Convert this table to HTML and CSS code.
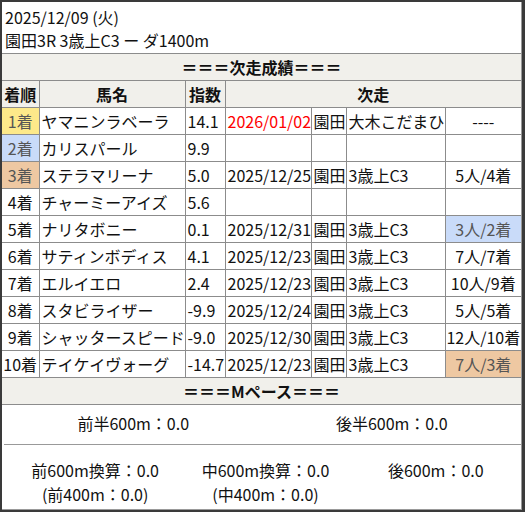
FILE: index.html
```html
<!DOCTYPE html>
<html lang="ja">
<head>
<meta charset="utf-8">
<link rel="stylesheet" href="styles.css">
</head>
<body>
<div class="page">
  <div class="head">
    <div class="line">2025/12/09 (火)</div>
    <div class="line">園田3R 3歳上C3 ー ダ1400m</div>
  </div>
  <table class="res">
    <colgroup>
      <col class="c1"><col class="c2"><col class="c3"><col class="c4"><col class="c5"><col class="c6"><col class="c7">
    </colgroup>
    <tr class="title"><td colspan="7">＝＝＝次走成績＝＝＝</td></tr>
    <tr class="hdr"><td>着順</td><td>馬名</td><td>指数</td><td colspan="4">次走</td></tr>
    <tr><td class="pos gold">1着</td><td>ヤマニンラベーラ</td><td>14.1</td><td class="red">2026/01/02</td><td>園田</td><td>大木こだまひ</td><td class="out">----</td></tr>
    <tr><td class="pos silver">2着</td><td>カリスパール</td><td>9.9</td><td></td><td></td><td></td><td class="out"></td></tr>
    <tr><td class="pos bronze">3着</td><td>ステラマリーナ</td><td>5.0</td><td>2025/12/25</td><td>園田</td><td>3歳上C3</td><td class="out">5人/4着</td></tr>
    <tr><td class="pos">4着</td><td>チャーミーアイズ</td><td>5.6</td><td></td><td></td><td></td><td class="out"></td></tr>
    <tr><td class="pos">5着</td><td>ナリタボニー</td><td>0.1</td><td>2025/12/31</td><td>園田</td><td>3歳上C3</td><td class="out silver">3人/2着</td></tr>
    <tr><td class="pos">6着</td><td>サティンボディス</td><td>4.1</td><td>2025/12/23</td><td>園田</td><td>3歳上C3</td><td class="out">7人/7着</td></tr>
    <tr><td class="pos">7着</td><td>エルイエロ</td><td>2.4</td><td>2025/12/23</td><td>園田</td><td>3歳上C3</td><td class="out">10人/9着</td></tr>
    <tr><td class="pos">8着</td><td>スタビライザー</td><td>-9.9</td><td>2025/12/24</td><td>園田</td><td>3歳上C3</td><td class="out">5人/5着</td></tr>
    <tr><td class="pos">9着</td><td>シャッタースピード</td><td>-9.0</td><td>2025/12/30</td><td>園田</td><td>3歳上C3</td><td class="out">12人/10着</td></tr>
    <tr><td class="pos">10着</td><td>テイケイヴォーグ</td><td>-14.7</td><td>2025/12/23</td><td>園田</td><td>3歳上C3</td><td class="out bronze">7人/3着</td></tr>
    <tr class="title"><td colspan="7">＝＝＝Mペース＝＝＝</td></tr>
  </table>
  <div class="halves">
    <div class="cell">前半600m：0.0</div>
    <div class="cell">後半600m：0.0</div>
  </div>
  <div class="thirds">
    <div class="cell"><div>前600m換算：0.0</div><div>(前400m：0.0)</div></div>
    <div class="cell"><div>中600m換算：0.0</div><div>(中400m：0.0)</div></div>
    <div class="cell"><div>後600m：0.0</div></div>
  </div>
</div>
</body>
</html>
```

FILE: styles.css
```css
html, body {
  margin: 0;
  padding: 0;
}
body {
  background: #3a3a3a;
  width: 525px;
  height: 512px;
  box-sizing: border-box;
  padding: 2px 3px 2px 2px;
  font-family: "Noto Sans CJK JP", "Noto Sans", sans-serif;
  font-size: 16px;
  color: #111;
}
.page {
  background: #fff;
  height: 508px;
  box-sizing: border-box;
  border-right: 1px solid #999;
  border-bottom: 1px solid #999;
}
.head {
  padding: 4px 3px 1px;
}
.line {
  line-height: 23px;
  height: 23px;
  white-space: nowrap;
}
.res {
  border-collapse: collapse;
  width: 519px;
  table-layout: fixed;
}
.c1 { width: 37px; }
.c2 { width: 146px; }
.c3 { width: 40px; }
.c4 { width: 86px; }
.c5 { width: 35px; }
.c6 { width: 99px; }
.c7 { width: 76px; }
.res td {
  border: 1px solid #8c8c8c;
  height: 27px;
  box-sizing: border-box;
  padding: 0 2px;
  line-height: 24px;
  white-space: nowrap;
  overflow: hidden;
}
.res tr td:first-child { border-left: none; }
.res tr td:last-child { border-right: none; }
.res .title td {
  background: #f1f0eb;
  font-weight: bold;
  text-align: center;
}
.res .hdr td {
  background: #f1f0eb;
  font-weight: bold;
  text-align: center;
}
.res td.pos {
  text-align: center;
  padding: 0;
}
.res td.out {
  text-align: center;
  padding: 0;
}
.gold { background: #fde98a; color: #555; }
.silver { background: #c9dbf9; color: #555; }
.bronze { background: #eec8a2; color: #555; }
.res td.red { color: #ff0000; }
.halves {
  display: grid;
  grid-template-columns: 1fr 1fr;
  height: 39px;
  border-bottom: 1px solid #999;
  margin: 0 0 0 2px;
}
.halves .cell {
  text-align: center;
  line-height: 36px;
}
.thirds {
  display: grid;
  grid-template-columns: 1fr 1fr 1fr;
  padding: 13px 0 0 8px;
}
.thirds .cell {
  text-align: center;
  line-height: 24px;
}
```
